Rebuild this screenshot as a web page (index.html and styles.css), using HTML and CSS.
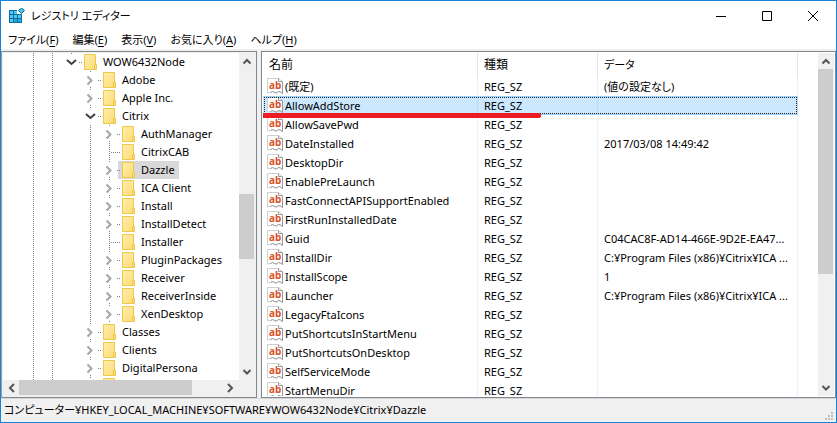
FILE: index.html
```html
<!DOCTYPE html>
<html lang="ja">
<head>
<meta charset="utf-8">
<title>レジストリ エディター</title>
<link rel="stylesheet" href="styles.css">
</head>
<body>
<svg class="defs" aria-hidden="true">
  <defs>
    <linearGradient id="paper" x1="0" y1="0" x2="1" y2="1"><stop offset="0" stop-color="#ffeeae"/><stop offset="1" stop-color="#fddb72"/></linearGradient>
    <symbol id="folder" viewBox="0 0 14 16">
      <path d="M.5.5h11v10h1v5H.5z" fill="url(#paper)" stroke="#eec84b"/>
      <path d="M10.500 15V10.500h2" fill="none" stroke="#eec84b"/>
    </symbol>
    <symbol id="value" viewBox="0 0 16 16">
      <path d="M.5.5h11l4 3v12l-2-1.500-2-.5-2 1.500-2-.5-2-1-2 1-3 .5z" fill="#fff" stroke="#cfcfcf"/>
      <path d="M11.500.5v3h3.500M15.500 3.500v12l-2-1.500-2-.5-2 1.500-2-.5-2-1-2 1" fill="none" stroke="#989898"/>
      <text x="2" y="11" class="ab">ab</text>
    </symbol>
    <symbol id="closed" viewBox="0 0 22 18">
      <path d="M7.500 5.500l4 4-4 4" fill="none" stroke="#a6a6a6" stroke-width="2"/>
      <path d="M10 0h1v1h-1zM10 16h1v1h-1zM18 9h1v1h-1zM20 9h1v1h-1z" fill="#808080"/>
    </symbol>
    <symbol id="open" viewBox="0 0 22 18">
      <path d="M6 7l4.500 4 4.500-4" fill="none" stroke="#404040" stroke-width="2"/>
      <path d="M10 0h1v1h-1zM18 9h1v1h-1zM20 9h1v1h-1z" fill="#808080"/>
    </symbol>
    <symbol id="leaf" viewBox="0 0 22 18">
      <path d="M10.500 0v18M12 9.500h10" fill="none" stroke="#808080" stroke-dasharray="1 1"/>
    </symbol>
    <symbol id="up" viewBox="0 0 16 16"><path d="M4.500 10.500l3.500-3.500 3.500 3.500" fill="none" stroke="#555" stroke-width="2"/></symbol>
    <symbol id="down" viewBox="0 0 16 16"><path d="M4.500 6l3.500 3.500L11.500 6" fill="none" stroke="#555" stroke-width="2"/></symbol>
    <symbol id="left" viewBox="0 0 16 16"><path d="M11 4L7 8l4 4" fill="none" stroke="#555" stroke-width="2"/></symbol>
    <symbol id="right" viewBox="0 0 16 16"><path d="M5 4l4 4-4 4" fill="none" stroke="#555" stroke-width="2"/></symbol>
  </defs>
</svg>
<div class="window">
  <header class="titlebar">
    <svg class="app-icon" width="17" height="16" viewBox="0 0 17 16" aria-hidden="true">
      <path d="M0 2h8v4h5v9H0z" fill="#0b6f9e"/>
      <path d="M1 3h3v3H1zM5 3h3v3H5zM1 7h3v3H1zM5 7h3v3H5zM9 7h3v3H9zM1 11h3v3H1z" fill="#4fc8f4"/>
      <path d="M5 11h3v3H5zM9 11h3v3H9z" fill="#23a5df"/>
      <path d="M12.500 0l3 2.500-3 3-3-3z" fill="#4fc0ea" stroke="#0b6f9e"/>
    </svg>
    <h1>レジストリ エディター</h1>
    <div class="controls">
      <button aria-label="最小化"><svg width="12" height="12"><path d="M1 6.500h10" stroke="#000"/></svg></button>
      <button aria-label="最大化"><svg width="12" height="12"><path d="M1.500 1.500h9v9h-9z" fill="none" stroke="#000"/></svg></button>
      <button aria-label="閉じる"><svg width="12" height="12"><path d="M1 1l10 10M11 1L1 11" stroke="#000"/></svg></button>
    </div>
  </header>
  <nav class="menubar">
    <button>ファイル(<u>F</u>)</button>
    <button>編集(<u>E</u>)</button>
    <button>表示(<u>V</u>)</button>
    <button>お気に入り(<u>A</u>)</button>
    <button>ヘルプ(<u>H</u>)</button>
  </nav>
  <main class="panes">
    <section class="pane tree-pane">
      <ul class="tree" id="tree"></ul>
      <div class="vbar">
        <button aria-label="上へ"><svg><use href="#up"/></svg></button>
        <div class="track"><div class="thumb tree-thumb"></div></div>
        <button aria-label="下へ"><svg><use href="#down"/></svg></button>
      </div>
      <div class="hbar">
        <button aria-label="左へ"><svg><use href="#left"/></svg></button>
        <div class="track"><div class="thumb side-thumb"></div></div>
        <button aria-label="右へ"><svg><use href="#right"/></svg></button>
      </div>
    </section>
    <section class="pane list-pane">
      <div class="list">
        <table>
          <colgroup><col class="c-name"><col class="c-type"><col class="c-data"></colgroup>
          <thead><tr><th>名前</th><th>種類</th><th class="kana">データ</th></tr></thead>
          <tbody id="values"></tbody>
        </table>
      </div>
      <div class="vbar">
        <button aria-label="上へ"><svg><use href="#up"/></svg></button>
        <div class="track"><div class="thumb list-thumb"></div></div>
        <button aria-label="下へ"><svg><use href="#down"/></svg></button>
      </div>
    </section>
  </main>
  <footer class="statusbar">
    <span>コンピューター¥HKEY_LOCAL_MACHINE¥SOFTWARE¥WOW6432Node¥Citrix¥Dazzle</span>
    <svg class="grip" width="9" height="9" aria-hidden="true"><path d="M6 0h2v2H6zM3 3h2v2H3zM6 3h2v2H6zM0 6h2v2H0zM3 6h2v2H3zM6 6h2v2H6z" fill="#bfbfbf"/></svg>
  </footer>
</div>
<script src="app.js"></script>
</body>
</html>
```
FILE: styles.css
```css
* { box-sizing: border-box; }
body {
  margin: 0;
  font: 11px/18px "Noto Sans", "Noto Sans CJK JP", sans-serif;
  font-feature-settings: "palt";
  color: #000;
}
.defs { position: absolute; width: 0; height: 0; }
button {
  border: 0;
  padding: 0;
  background: none;
  font: inherit;
  font-feature-settings: inherit;
  color: inherit;
}
.window {
  display: flex;
  flex-direction: column;
  height: 100vh;
  border: 1px solid #1883d7;
  background: #f0f0f0;
}
.titlebar {
  display: flex;
  align-items: center;
  height: 29px;
  padding-left: 8px;
  background: #fff;
}
.titlebar h1 {
  flex: 1;
  margin: 0 0 0 5px;
  font-size: 11px;
  font-weight: 400;
}
.controls { display: flex; }
.controls button {
  display: flex;
  align-items: center;
  justify-content: center;
  width: 46px;
  height: 28px;
}
.menubar {
  display: flex;
  gap: 14px;
  height: 19px;
  padding: 1px 7px 0;
  background: #fff;
}
.menubar u { text-underline-offset: 2px; }
.panes {
  display: flex;
  flex: 1;
  gap: 4px;
  min-height: 0;
  padding-top: 2px;
}
.pane {
  min-width: 0;
  border: 1px solid #828790;
  padding: 1px;
  background: #fff;
}
.tree-pane {
  display: grid;
  grid-template: minmax(0, 1fr) 16px / minmax(0, 1fr) 16px;
  width: 256px;
  background: #f0f0f0;
  border-left-color: #a0a0a0;
}
.tree {
  margin: 0;
  padding: 0 0 0 20px;
  overflow: hidden;
  list-style: none;
  background: #fff;
}
.tree li { display: flex; height: 18px; }
.cell { width: 19px; height: 18px; flex: none; }
.cell svg { position: relative; z-index: 1; display: block; width: 22px; height: 18px; }
.guide {
  background: repeating-linear-gradient(#808080 0 1px, transparent 1px 2px) 10px 0 / 1px 18px no-repeat;
}
.node { display: flex; gap: 5px; padding: 0 4px; white-space: nowrap; }
.node svg { width: 14px; height: 16px; margin-top: 1px; }
.selected-node { background: #d9d9d9; }
.vbar { display: flex; flex-direction: column; width: 16px; background: #f0f0f0; }
.hbar { display: flex; height: 16px; background: #f0f0f0; }
.vbar button, .hbar button { width: 16px; height: 16px; flex: none; }
.vbar button svg, .hbar button svg { display: block; width: 16px; height: 16px; }
.track { flex: 1; display: flex; }
.vbar .track { flex-direction: column; }
.thumb { background: #cdcdcd; }
.tree-thumb { width: 15px; height: 22%; margin-top: 125px; }
.side-thumb { height: 15px; width: 85%; }
.list-thumb { width: 15px; height: 66%; }
.list-pane { flex: 1; display: flex; }
.list { flex: 1; min-width: 0; padding-right: 20px; overflow: hidden; }
table { width: 100%; border-collapse: separate; border-spacing: 0; table-layout: fixed; }
.c-name { width: 215px; }
.c-type { width: 120px; }
th {
  height: 24px;
  padding: 0 6px;
  border-right: 1px solid #e5e5e5;
  font-size: 12px;
  font-weight: 400;
  text-align: left;
}
.kana { font-size: 11px; }
td {
  height: 19px;
  padding: 0 6px;
  border-right: 1px solid #e9f2fb;
  line-height: 17px;
  white-space: nowrap;
}
.name { display: flex; gap: 2px; margin-left: -2px; }
.name svg { width: 16px; height: 16px; }
.ab { font: 700 10px "Noto Sans", sans-serif; fill: #d9532c; }
.selected { position: relative; }
.selected td {
  border-top: 1px solid #99d1ff;
  border-bottom: 1px solid #99d1ff;
  border-right-color: #b9dcf9;
  background: #cce8ff;
}
.focus {
  position: absolute;
  inset: 1px;
  border: 1px dotted #222;
}
.mark {
  position: absolute;
  z-index: 2;
  left: -2px;
  top: 17px;
  width: 280px;
  height: 5px;
  border-radius: 2px;
  background: #ed1c24;
}
.statusbar {
  display: flex;
  align-items: flex-end;
  justify-content: space-between;
  height: 24px;
  padding: 0 2px 1px 3px;
  border-top: 1px solid #d7d7d7;
}
.statusbar span { align-self: center; }
```
FILE: app.js
```js
// level, expander state, key name
const keys = [
  [0, "open", "WOW6432Node"],
  [1, "closed", "Adobe"],
  [1, "closed", "Apple Inc."],
  [1, "open", "Citrix"],
  [2, "closed", "AuthManager"],
  [2, "leaf", "CitrixCAB"],
  [2, "closed", "Dazzle"],
  [2, "closed", "ICA Client"],
  [2, "closed", "Install"],
  [2, "closed", "InstallDetect"],
  [2, "leaf", "Installer"],
  [2, "closed", "PluginPackages"],
  [2, "closed", "Receiver"],
  [2, "closed", "ReceiverInside"],
  [2, "closed", "XenDesktop"],
  [1, "closed", "Classes"],
  [1, "closed", "Clients"],
  [1, "closed", "DigitalPersona"],
  [1, "closed", ""]
];
const guide = '<span class="cell guide"></span>';
const blank = '<span class="cell"></span>';
document.getElementById("tree").innerHTML = keys.map(([level, state, name]) =>
  "<li>" + guide + guide + (level > 0 ? blank : "") + (level > 1 ? guide : "") +
  `<span class="cell"><svg><use href="#${state}"/></svg></span>` +
  `<span class="node${name === "Dazzle" ? " selected-node" : ""}"><svg><use href="#folder"/></svg>${name}</span></li>`
).join("");

const values = [
  ["(既定)", "(値の設定なし)"],
  ["AllowAddStore", ""],
  ["AllowSavePwd", ""],
  ["DateInstalled", "2017/03/08 14:49:42"],
  ["DesktopDir", ""],
  ["EnablePreLaunch", ""],
  ["FastConnectAPISupportEnabled", ""],
  ["FirstRunInstalledDate", ""],
  ["Guid", "C04CAC8F-AD14-466E-9D2E-EA47..."],
  ["InstallDir", "C:¥Program Files (x86)¥Citrix¥ICA ..."],
  ["InstallScope", "1"],
  ["Launcher", "C:¥Program Files (x86)¥Citrix¥ICA ..."],
  ["LegacyFtaIcons", ""],
  ["PutShortcutsInStartMenu", ""],
  ["PutShortcutsOnDesktop", ""],
  ["SelfServiceMode", ""],
  ["StartMenuDir", ""]
];
document.getElementById("values").innerHTML = values.map(([name, data]) => {
  const on = name === "AllowAddStore";
  return `<tr${on ? ' class="selected"' : ""}><td><div class="name"><svg><use href="#value"/></svg>${name}</div>` +
    `${on ? '<i class="focus"></i><i class="mark"></i>' : ""}</td><td>REG_SZ</td><td>${data}</td></tr>`;
}).join("");
```
